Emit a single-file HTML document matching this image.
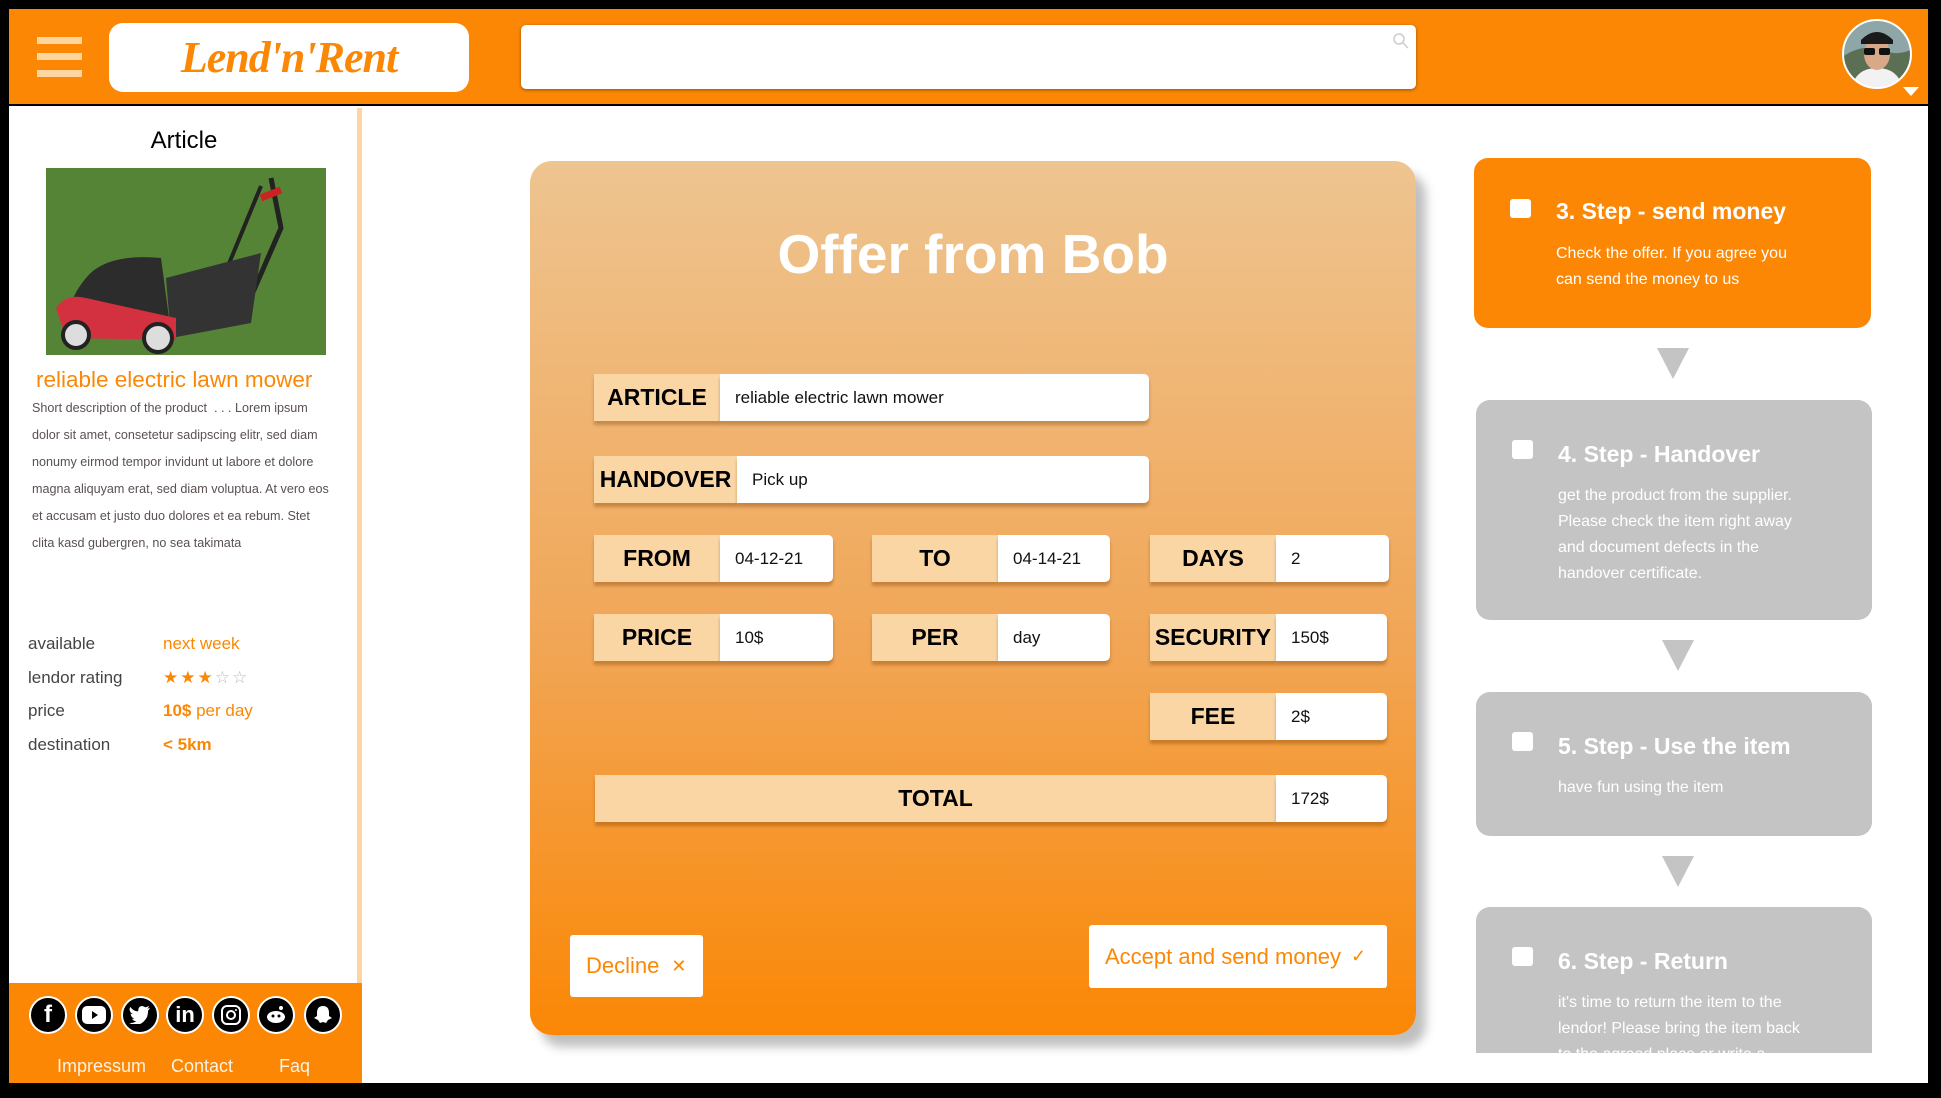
<!DOCTYPE html>
<html><head><meta charset="utf-8">
<style>
*{margin:0;padding:0;box-sizing:border-box}
html,body{width:1941px;height:1098px;background:#000;overflow:hidden;font-family:"Liberation Sans",sans-serif}
.a{position:absolute}
#page{position:absolute;left:9px;top:9px;width:1919px;height:1074px;background:#fff;overflow:hidden}
.hdr{left:0;top:0;width:1919px;height:97px;background:#FB8705;border-bottom:2px solid #000}
.bar{left:28px;width:45px;height:7px;background:#FDD5A0}
.narrow{font-family:"Liberation Sans",sans-serif}
.lbl{background:#FAD6A5;font-weight:bold;font-size:23px;color:#000;display:flex;align-items:center;justify-content:center;box-shadow:0 4px 3px rgba(120,60,0,.35)}
.val{background:#fff;font-size:17px;color:#111;display:flex;align-items:center;padding-left:15px;border-radius:0 5px 5px 0;box-shadow:0 4px 3px rgba(120,60,0,.35)}
.step{border-radius:14px;color:#fff}
.step .cb{position:absolute;left:36px;width:21px;height:19px;background:#fff;border-radius:3px}
.step .t{position:absolute;left:82px;font-weight:bold;font-size:23px;white-space:nowrap}
.step .d{position:absolute;left:82px;font-size:16px;line-height:26px;white-space:nowrap}
.arr{width:0;height:0;border-left:16px solid transparent;border-right:16px solid transparent;border-top:31px solid #C4C4C4}
.soc{width:38px;height:38px;border-radius:50%;background:#000;border:2px solid #fff;display:flex;align-items:center;justify-content:center;color:#fff;font-weight:bold}
</style></head><body>
<div id="page">
<div class="a hdr"></div>
<div class="a bar" style="top:28px"></div>
<div class="a bar" style="top:44px"></div>
<div class="a bar" style="top:61px"></div>
<div class="a" style="left:100px;top:14px;width:360px;height:69px;background:#fff;border-radius:14px;text-align:center;font-family:'Liberation Serif',serif;font-style:italic;font-weight:bold;font-size:44px;color:#FB8705;line-height:69px;letter-spacing:-1px">Lend'n'Rent</div>
<div class="a" style="left:512px;top:16px;width:895px;height:64px;background:#fff;border-radius:5px;box-shadow:0 1px 3px rgba(0,0,0,.4)"></div>
<svg class="a" style="left:1382px;top:22px" width="20" height="20" viewBox="0 0 20 20"><circle cx="8" cy="8" r="5" fill="none" stroke="#ccc" stroke-width="1.5"/><line x1="12" y1="12" x2="17" y2="17" stroke="#ccc" stroke-width="1.5"/></svg>
<svg class="a" style="left:1832px;top:9px" width="72" height="72" viewBox="0 0 72 72">
<defs><clipPath id="cc"><circle cx="36" cy="36" r="34"/></clipPath></defs>
<g clip-path="url(#cc)"><rect width="72" height="72" fill="#8fa6a8"/><path d="M0 40 Q20 25 40 32 T72 30 V72 H0Z" fill="#5b6f55"/><path d="M10 72 Q14 50 36 50 Q58 50 62 72Z" fill="#f2f2f2"/><ellipse cx="36" cy="36" rx="13" ry="16" fill="#d8a888"/><path d="M20 22 Q36 6 52 22 L52 26 H20Z" fill="#1a1a1a"/><rect x="23" y="30" width="11" height="7" rx="2" fill="#111"/><rect x="38" y="30" width="11" height="7" rx="2" fill="#111"/></g>
<circle cx="36" cy="36" r="34" fill="none" stroke="#fff" stroke-width="2"/></svg>
<div class="a" style="left:1894px;top:78px;width:0;height:0;border-left:8px solid transparent;border-right:8px solid transparent;border-top:9px solid #fff"></div>

<!-- sidebar -->
<div class="a" style="left:348px;top:99px;width:5px;height:880px;background:#FDD5A0"></div>
<div class="a narrow" style="left:0;top:118px;width:350px;text-align:center;font-size:24px;color:#000">Article</div>
<svg class="a" style="left:37px;top:159px" width="280" height="187" viewBox="0 0 280 187">
<rect width="280" height="187" fill="#5c8a3a"/><rect width="280" height="187" fill="#4f7d33" opacity=".5"/>
<path d="M225 10 L235 60 L200 140" stroke="#222" stroke-width="5" fill="none"/>
<path d="M215 18 L175 115" stroke="#222" stroke-width="4" fill="none"/>
<path d="M215 30 L235 22" stroke="#c22" stroke-width="7"/>
<path d="M120 110 L215 85 L205 155 L125 170Z" fill="#333"/>
<path d="M40 110 Q60 85 115 90 L125 165 L30 160 Q15 140 40 110Z" fill="#2c2c2c"/>
<path d="M10 140 Q20 125 40 130 L130 150 L130 172 L20 170Z" fill="#d33040"/>
<circle cx="30" cy="167" r="13" fill="#ddd" stroke="#222" stroke-width="4"/>
<circle cx="112" cy="170" r="14" fill="#ddd" stroke="#222" stroke-width="4"/>
</svg>
<div class="a narrow" style="left:27px;top:358px;font-size:22.5px;color:#FB8705;white-space:nowrap">reliable electric lawn mower</div>
<div class="a narrow" style="left:23px;top:386px;font-size:12.6px;line-height:27px;color:#5a5050;white-space:nowrap">Short description of the product &nbsp;. . . Lorem ipsum<br>dolor sit amet, consetetur sadipscing elitr, sed diam<br>nonumy eirmod tempor invidunt ut labore et dolore<br>magna aliquyam erat, sed diam voluptua. At vero eos<br>et accusam et justo duo dolores et ea rebum. Stet<br>clita kasd gubergren, no sea takimata</div>
<div class="a narrow" style="left:19px;top:618px;font-size:17px;line-height:33.5px;color:#444">available<br>lendor rating<br>price<br>destination</div>
<div class="a narrow" style="left:154px;top:618px;font-size:17px;line-height:33.5px;color:#FB8705">next week<br><span style="letter-spacing:2px">★★★<span style="color:#bbb">☆☆</span></span><br><b>10$</b> per day<br><b>&lt; 5km</b></div>
<div class="a" style="left:0;top:974px;width:353px;height:100px;background:#FB8705"></div>
<div class="a soc" style="left:20px;top:987px;font-size:24px">f</div>
<div class="a soc" style="left:66px;top:987px"><svg width="24" height="18"><rect width="24" height="18" rx="5" fill="#fff"/><path d="M10 5 L16 9 L10 13Z" fill="#000"/></svg></div>
<div class="a soc" style="left:112px;top:987px"><svg width="22" height="18" viewBox="0 0 24 20"><path d="M23 2 Q21 3 20 3 Q22 1 22 0 Q20 1 18 1.5 Q16 0 14 0 Q10 0.5 10 5 L10 6 Q5 6 1 1 Q-1 6 4 9 Q2 9 1.5 8.5 Q2 13 6 14 Q4 14.5 3 14 Q5 17 8 17 Q5 19 0 19 Q13 25 20 12 Q21 8 21 5 Q22.5 4 23 2Z" fill="#fff"/></svg></div>
<div class="a soc" style="left:157px;top:987px;font-size:22px">in</div>
<div class="a soc" style="left:203px;top:987px"><svg width="20" height="20"><rect x="1" y="1" width="18" height="18" rx="5" fill="none" stroke="#fff" stroke-width="2"/><circle cx="10" cy="10" r="4" fill="none" stroke="#fff" stroke-width="2"/><circle cx="15" cy="5" r="1" fill="#fff"/></svg></div>
<div class="a soc" style="left:248px;top:987px"><svg width="22" height="20"><ellipse cx="11" cy="12" rx="9" ry="6" fill="#fff"/><circle cx="16" cy="3" r="2" fill="#fff"/><circle cx="8" cy="11" r="1.5" fill="#000"/><circle cx="14" cy="11" r="1.5" fill="#000"/></svg></div>
<div class="a soc" style="left:295px;top:987px"><svg width="20" height="20"><path d="M10 1 Q16 1 16 8 L16 11 L19 13 L15 15 L13 18 L10 17 L7 18 L5 15 L1 13 L4 11 L4 8 Q4 1 10 1Z" fill="#fff"/></svg></div>
<div class="a narrow" style="left:48px;top:1047px;font-size:18px;color:#fff2e0">Impressum</div>
<div class="a narrow" style="left:162px;top:1047px;font-size:18px;color:#fff2e0">Contact</div>
<div class="a narrow" style="left:270px;top:1047px;font-size:18px;color:#fff2e0">Faq</div>

<!-- card -->
<div class="a" style="left:521px;top:152px;width:886px;height:874px;border-radius:22px;background:linear-gradient(#EEC490,#F1A656 55%,#FB8705);box-shadow:10px 12px 10px rgba(0,0,0,.25)"></div>
<div class="a" style="left:521px;top:213px;width:886px;text-align:center;font-weight:bold;font-size:55px;color:#fff">Offer from Bob</div>

<div class="a lbl" style="left:585px;top:365px;width:126px;height:47px">ARTICLE</div>
<div class="a val" style="left:711px;top:365px;width:429px;height:47px">reliable electric lawn mower</div>
<div class="a lbl" style="left:585px;top:447px;width:143px;height:47px">HANDOVER</div>
<div class="a val" style="left:728px;top:447px;width:412px;height:47px">Pick up</div>

<div class="a lbl" style="left:585px;top:526px;width:126px;height:47px">FROM</div>
<div class="a val" style="left:711px;top:526px;width:113px;height:47px">04-12-21</div>
<div class="a lbl" style="left:863px;top:526px;width:126px;height:47px">TO</div>
<div class="a val" style="left:989px;top:526px;width:112px;height:47px">04-14-21</div>
<div class="a lbl" style="left:1141px;top:526px;width:126px;height:47px">DAYS</div>
<div class="a val" style="left:1267px;top:526px;width:113px;height:47px">2</div>

<div class="a lbl" style="left:585px;top:605px;width:126px;height:47px">PRICE</div>
<div class="a val" style="left:711px;top:605px;width:113px;height:47px">10$</div>
<div class="a lbl" style="left:863px;top:605px;width:126px;height:47px">PER</div>
<div class="a val" style="left:989px;top:605px;width:112px;height:47px">day</div>
<div class="a lbl" style="left:1141px;top:605px;width:126px;height:47px">SECURITY</div>
<div class="a val" style="left:1267px;top:605px;width:111px;height:47px">150$</div>

<div class="a lbl" style="left:1141px;top:684px;width:126px;height:47px">FEE</div>
<div class="a val" style="left:1267px;top:684px;width:111px;height:47px">2$</div>

<div class="a lbl" style="left:586px;top:766px;width:681px;height:47px">TOTAL</div>
<div class="a val" style="left:1267px;top:766px;width:111px;height:47px">172$</div>

<div class="a narrow" style="left:561px;top:926px;width:133px;height:62px;background:#fff;border-radius:3px;color:#FB8705;font-size:22px;display:flex;align-items:center;padding-left:16px">Decline <span style="font-size:18px;margin-left:12px">✕</span></div>
<div class="a narrow" style="left:1080px;top:916px;width:298px;height:63px;background:#fff;border-radius:3px;color:#FB8705;font-size:22px;display:flex;align-items:center;padding-left:16px;white-space:nowrap">Accept and send money <span style="font-size:18px;margin-left:10px">✓</span></div>

<!-- steps -->
<div class="a step" style="left:1465px;top:149px;width:397px;height:170px;background:#FB8705">
<div class="cb" style="top:41px"></div>
<div class="t" style="top:40px">3. Step - send money</div>
<div class="d" style="top:83px">Check the offer. If you agree you<br>can send the money to us</div></div>
<div class="a arr" style="left:1648px;top:339px"></div>
<div class="a step" style="left:1467px;top:391px;width:396px;height:220px;background:#C4C4C4">
<div class="cb" style="top:40px"></div>
<div class="t" style="top:41px">4. Step - Handover</div>
<div class="d" style="top:83px">get the product from the supplier.<br>Please check the item right away<br>and document defects in the<br>handover certificate.</div></div>
<div class="a arr" style="left:1653px;top:631px"></div>
<div class="a step" style="left:1467px;top:683px;width:396px;height:144px;background:#C4C4C4">
<div class="cb" style="top:40px"></div>
<div class="t" style="top:41px">5. Step - Use the item</div>
<div class="d" style="top:83px">have fun using the item</div></div>
<div class="a arr" style="left:1653px;top:847px"></div>
<div class="a step" style="left:1467px;top:898px;width:396px;height:146px;background:#C4C4C4;border-radius:14px 14px 0 0;overflow:hidden">
<div class="cb" style="top:40px"></div>
<div class="t" style="top:41px">6. Step - Return</div>
<div class="d" style="top:83px">it's time to return the item to the<br>lendor! Please bring the item back<br>to the agreed place or write a</div></div>
</div>
</body></html>
